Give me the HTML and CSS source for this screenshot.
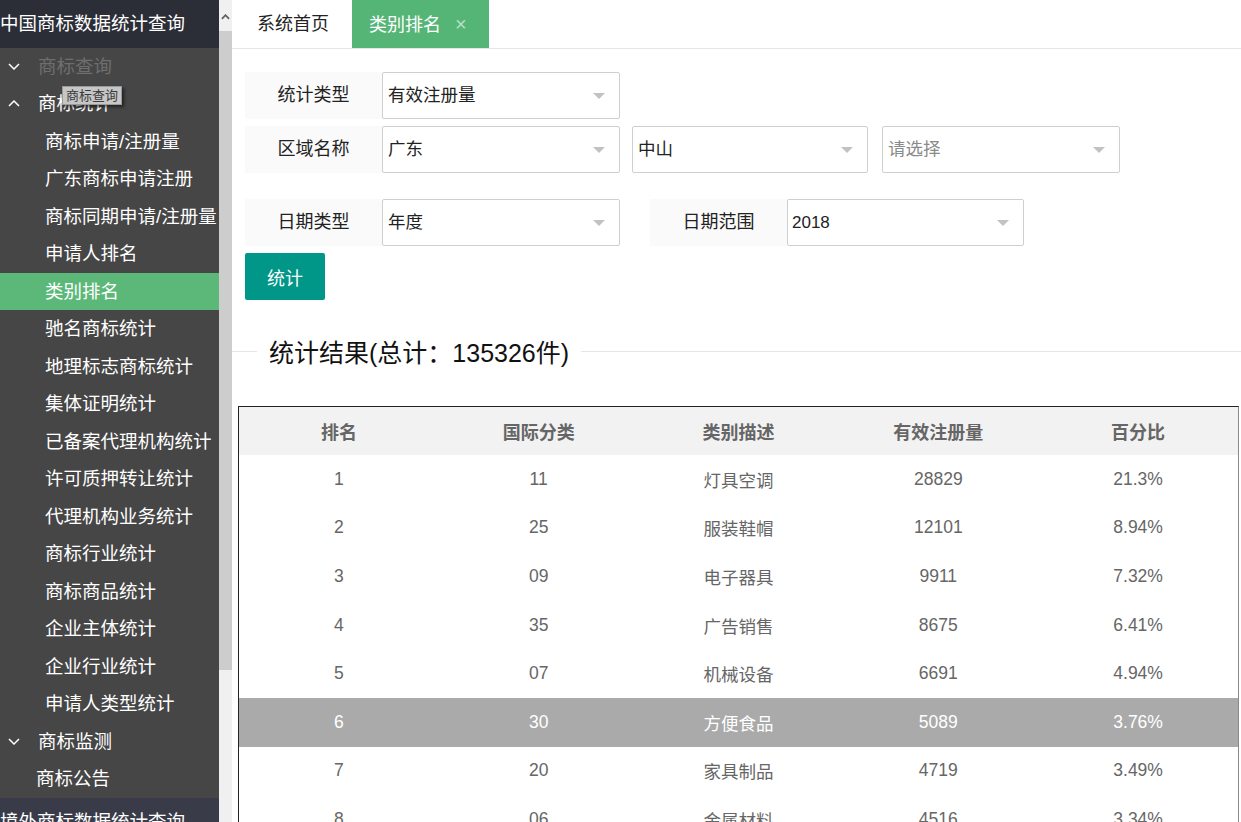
FILE: index.html
```html
<!DOCTYPE html>
<html lang="zh-CN">
<head>
<meta charset="utf-8">
<title>类别排名</title>
<link rel="stylesheet" href="styles.css">
</head>
<body>
<div class="app">
  <aside class="sidebar">
    <div class="brand">中国商标数据统计查询</div>
    <ul class="nav">
      <li class="nav-top muted"><svg class="chev" viewBox="0 0 12 7"><polyline points="1,1 6,6 11,1"/></svg><span>商标查询</span></li>
      <li class="nav-top"><svg class="chev" viewBox="0 0 12 7"><polyline points="1,6 6,1 11,6"/></svg><span>商标统计</span></li>
      <li class="nav-sub">商标申请/注册量</li>
      <li class="nav-sub">广东商标申请注册</li>
      <li class="nav-sub">商标同期申请/注册量</li>
      <li class="nav-sub">申请人排名</li>
      <li class="nav-sub active">类别排名</li>
      <li class="nav-sub">驰名商标统计</li>
      <li class="nav-sub">地理标志商标统计</li>
      <li class="nav-sub">集体证明统计</li>
      <li class="nav-sub">已备案代理机构统计</li>
      <li class="nav-sub">许可质押转让统计</li>
      <li class="nav-sub">代理机构业务统计</li>
      <li class="nav-sub">商标行业统计</li>
      <li class="nav-sub">商标商品统计</li>
      <li class="nav-sub">企业主体统计</li>
      <li class="nav-sub">企业行业统计</li>
      <li class="nav-sub">申请人类型统计</li>
      <li class="nav-top"><svg class="chev" viewBox="0 0 12 7"><polyline points="1,1 6,6 11,1"/></svg><span>商标监测</span></li>
      <li class="nav-leaf">商标公告</li>
    </ul>
    <div class="brand brand-alt">境外商标数据统计查询</div>
    <div class="tooltip">商标查询</div>
  </aside>
  <div class="vscroll">
    <div class="vs-btn"><svg viewBox="0 0 10 6"><polyline points="1,5 5,1 9,5"/></svg></div>
    <div class="vs-thumb"></div>
  </div>
  <main class="main">
    <div class="tabs">
      <div class="tab">系统首页</div>
      <div class="tab active">类别排名<span class="close">×</span></div>
    </div>
    <div class="content">
      <div class="form">
        <div class="form-row">
          <div class="lbl">统计类型</div>
          <div class="sel"><span>有效注册量</span><i class="caret"></i></div>
        </div>
        <div class="form-row row-area">
          <div class="lbl">区域名称</div>
          <div class="sel"><span>广东</span><i class="caret"></i></div>
          <div class="sel sel-2"><span>中山</span><i class="caret"></i></div>
          <div class="sel sel-3"><span class="ph">请选择</span><i class="caret"></i></div>
        </div>
        <div class="form-row row-date">
          <div class="lbl">日期类型</div>
          <div class="sel"><span>年度</span><i class="caret"></i></div>
          <div class="lbl lbl-2">日期范围</div>
          <div class="sel sel-4"><span class="num">2018</span><i class="caret"></i></div>
        </div>
        <button class="btn">统计</button>
      </div>
      <div class="legend">
        <span class="line line-l"></span>
        <span class="legend-text">统计结果(总计：135326件)</span>
        <span class="line line-r"></span>
      </div>
      <table class="grid">
        <thead>
          <tr><th>排名</th><th>国际分类</th><th>类别描述</th><th>有效注册量</th><th>百分比</th></tr>
        </thead>
        <tbody>
          <tr><td>1</td><td>11</td><td>灯具空调</td><td>28829</td><td>21.3%</td></tr>
          <tr><td>2</td><td>25</td><td>服装鞋帽</td><td>12101</td><td>8.94%</td></tr>
          <tr><td>3</td><td>09</td><td>电子器具</td><td>9911</td><td>7.32%</td></tr>
          <tr><td>4</td><td>35</td><td>广告销售</td><td>8675</td><td>6.41%</td></tr>
          <tr><td>5</td><td>07</td><td>机械设备</td><td>6691</td><td>4.94%</td></tr>
          <tr class="hl"><td>6</td><td>30</td><td>方便食品</td><td>5089</td><td>3.76%</td></tr>
          <tr><td>7</td><td>20</td><td>家具制品</td><td>4719</td><td>3.49%</td></tr>
          <tr><td>8</td><td>06</td><td>金属材料</td><td>4516</td><td>3.34%</td></tr>
        </tbody>
      </table>
    </div>
  </main>
</div>
</body>
</html>
```
FILE: styles.css
```css
* { box-sizing: border-box; }
html, body { margin: 0; padding: 0; }
body {
  width: 1241px;
  height: 822px;
  overflow: hidden;
  background: #fff;
  font-family: "Liberation Sans", "Noto Sans CJK SC", sans-serif;
  color: #333;
}
.app { display: flex; height: 822px; overflow: hidden; }

/* sidebar */
.sidebar {
  position: relative;
  width: 219px;
  flex: none;
  background: #464646;
  overflow: hidden;
  white-space: nowrap;
  display: flex;
  flex-direction: column;
}
.brand {
  height: 47.5px;
  line-height: 47.5px;
  background: #2c2e37;
  color: #fff;
  font-size: 18.5px;
  flex: none;
}
.brand-alt { background: #393c48; }
.nav { list-style: none; margin: 0; padding: 0; flex: none; }
.nav li {
  height: 37.5px;
  line-height: 37.5px;
  font-size: 18.5px;
  color: #fff;
}
.nav-top { display: flex; align-items: center; }
.nav-top span { margin-left: 18px; }
.nav-top.muted span { color: #6e6e6e; }
.chev {
  width: 12px; height: 7px;
  margin-left: 8px;
  fill: none; stroke: #fff; stroke-width: 1.5;
}
.nav-sub { padding-left: 45px; }
.nav-sub.active { background: #5cb878; }
.nav-leaf { padding-left: 36px; }
.tooltip {
  position: absolute;
  left: 62px; top: 86px;
  width: 60px; height: 19px;
  line-height: 17px;
  font-size: 13px;
  color: #3a3a3a;
  text-align: center;
  background: #c6c6c6;
  border: 1px solid #9a9a9a;
  box-shadow: 2px 2px 3px rgba(0,0,0,.55);
}

/* fake scrollbar */
.vscroll {
  width: 13px;
  flex: none;
  background: #f0f0f0;
  display: flex;
  flex-direction: column;
}
.vs-btn { height: 31px; display: flex; justify-content: center; padding-top: 14px; }
.vs-btn svg { width: 9px; height: 6px; fill: none; stroke: #606060; stroke-width: 2; }
.vs-thumb { height: 639px; background: #cdcdcd; }

/* main */
.main { flex: 1; min-width: 0; }
.tabs {
  display: flex;
  height: 49px;
  border-bottom: 1px solid #e6e6e6;
}
.tab {
  height: 48px;
  line-height: 48px;
  padding: 0 23px 0 25px;
  font-size: 18px;
  color: #222;
}
.tab.active {
  background: #55b576;
  color: #fff;
  padding: 0 22px 0 17px;
}
.close {
  margin-left: 14px;
  color: #b8e0c4;
  font-size: 20px;
}
.content { padding-top: 23px; }
.form { padding-left: 13px; }
.form-row { display: flex; height: 47px; margin-bottom: 7px; }
.form-row.row-area { margin-bottom: 26px; }
.lbl {
  width: 137px;
  flex: none;
  background: #fafafa;
  text-align: center;
  line-height: 47px;
  font-size: 18px;
  color: #222;
}
.sel {
  position: relative;
  width: 238px;
  flex: none;
  border: 1px solid #cfcfcf;
  border-radius: 2px;
  padding-left: 5px;
  line-height: 45px;
  font-size: 17.5px;
  color: #222;
}
.sel-2 { margin-left: 12px; width: 236px; }
.sel-3 { margin-left: 14px; }
.lbl-2 { margin-left: 30px; }
.sel-4 { width: 237px; padding-left: 4px; }
.ph { color: #8a8a8a; }
.num { font-size: 17px; }
.caret {
  position: absolute;
  right: 14px; top: 20px;
  width: 0; height: 0;
  border-style: solid;
  border-width: 6px 6px 0 6px;
  border-color: #c2c2c2 transparent transparent transparent;
}
.btn {
  display: block;
  width: 80px; height: 47px;
  border: none;
  border-radius: 2px;
  background: #009688;
  color: #fff;
  font-family: inherit;
  font-size: 18px;
  padding: 0;
}
.legend {
  display: flex;
  align-items: center;
  height: 32px;
  margin-top: 35px;
}
.line { height: 1px; background: #e6e6e6; }
.line-l { width: 25px; flex: none; }
.line-r { flex: 1; }
.legend-text {
  padding: 0 12px;
  font-size: 25px;
  color: #111;
  white-space: nowrap;
}
.grid {
  margin: 39px 0 0 6px;
  width: 1001px;
  border-collapse: separate;
  border-spacing: 0;
  border-top: 1px solid #222;
  border-left: 1px solid #222;
  border-right: 1px solid #8a8a8a;
  table-layout: fixed;
}
.grid th {
  height: 48px;
  background: #f2f2f2;
  font-size: 18px;
  font-weight: bold;
  color: #666;
  padding: 0;
}
.grid td {
  height: 48.6px;
  text-align: center;
  font-size: 17.5px;
  color: #666;
  padding: 0;
}
.grid tr.hl td { background: #aaaaaa; color: #fff; }
```
